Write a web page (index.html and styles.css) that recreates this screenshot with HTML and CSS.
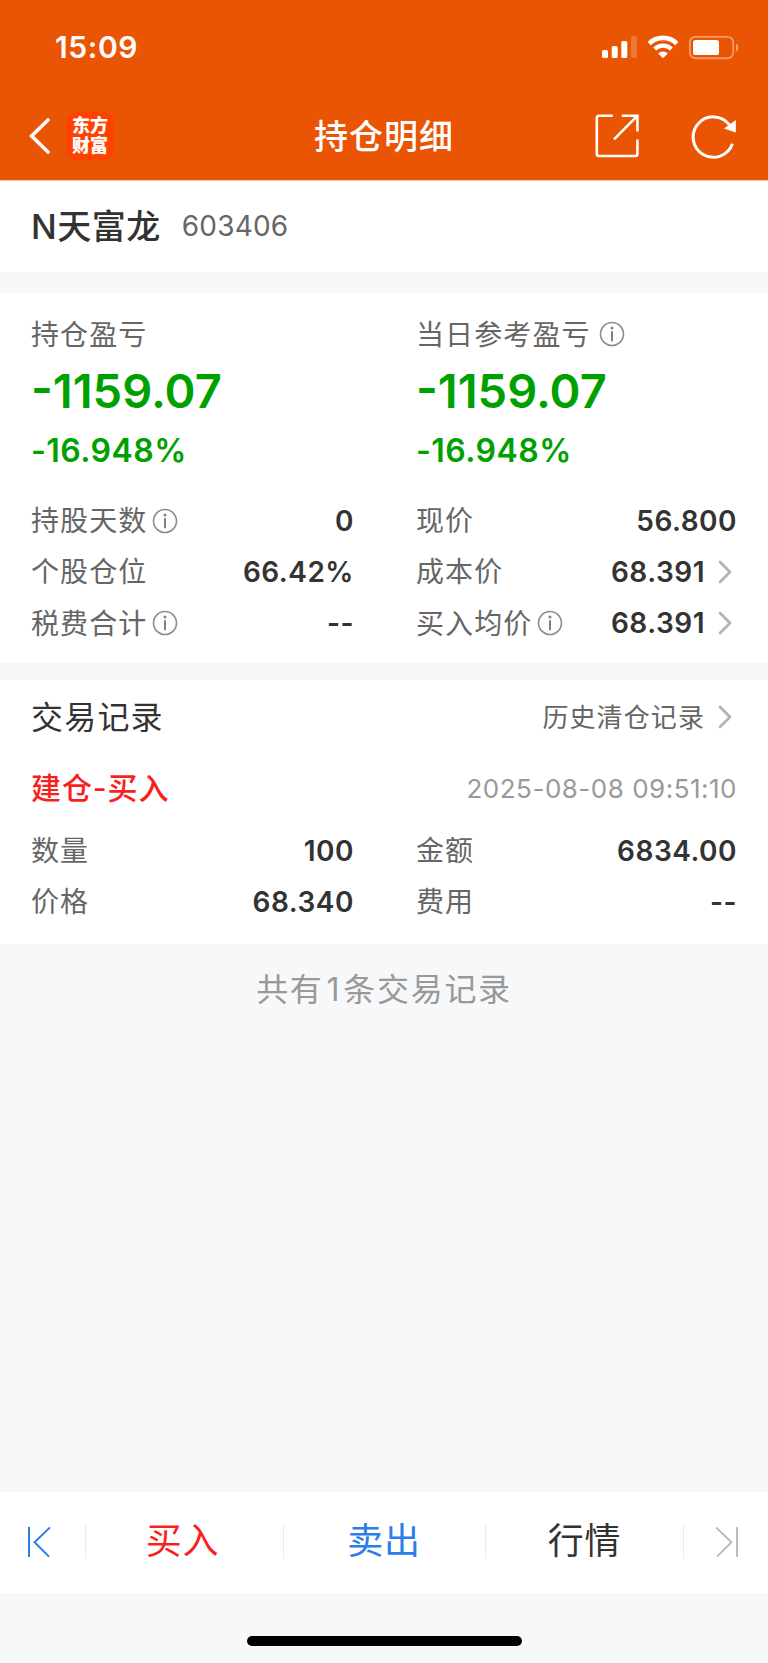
FILE: index.html
```
<!DOCTYPE html>
<html lang="zh-CN">
<head>
  <meta charset="UTF-8" />
  <meta name="viewport" content="width=device-width, initial-scale=1.0"/>
  <title>持仓明细</title>
  <link rel="stylesheet" href="styles.css">
</head>
<body>

  <!-- Shared icons -->
  <svg class="sprite" width="0" height="0">
    <symbol id="info" viewBox="0 0 26 26">
      <circle cx="13" cy="13" r="11.5" fill="none" stroke="#8c8c8c" stroke-width="1.6"/>
      <circle cx="13" cy="6.9" r="1.5" fill="#808080"/>
      <path d="M13 11v8.6" stroke="#808080" stroke-width="2" stroke-linecap="round"/>
    </symbol>
    <symbol id="chevron" viewBox="0 0 14 24">
      <path d="M2 2l10 10L2 22" fill="none" stroke="#b3b3b3" stroke-width="2.8" stroke-linecap="round" stroke-linejoin="round"/>
    </symbol>
  </svg>

  <!-- Header -->
  <header class="header">
    <div class="status-bar">
      <span class="time">15:09</span>
      <svg class="status-icons" width="138" height="26" viewBox="0 0 138 26">
        <g fill="#fff">
          <rect x="0" y="16" width="6" height="8" rx="1.6"/>
          <rect x="9.7" y="12" width="6" height="12" rx="1.6"/>
          <rect x="19.3" y="7" width="6" height="17" rx="1.6"/>
          <rect x="29" y="2" width="6" height="22" rx="1.6" opacity=".2"/>
        </g>
        <g fill="none" stroke="#fff">
          <path d="M47.2 9.6a19.5 19.5 0 0 1 27.6 0" stroke-width="4.6"/>
          <path d="M52.6 15.1a12 12 0 0 1 16.8 0" stroke-width="4.2"/>
        </g>
        <path d="M56.2 19.5a7 7 0 0 1 9.6 0L61 24.3z" fill="#fff"/>
        <rect x="87.9" y="2.9" width="43.3" height="21.4" rx="5.5" fill="none" stroke="#fff" stroke-opacity=".4" stroke-width="1.9"/>
        <rect x="91" y="6" width="26" height="15" rx="2.6" fill="#fff"/>
        <path d="M134 9.5c3 1.2 3 7 0 8.2z" fill="#fff" fill-opacity=".45"/>
      </svg>
    </div>
    <div class="nav-bar">
      <div class="nav-left">
        <svg width="22" height="36" viewBox="0 0 22 36">
          <path d="M19 2L2.6 18 19 34" fill="none" stroke="#fff" stroke-width="3.6" stroke-linecap="round"/>
        </svg>
        <div class="logo"><span>东方</span><span>财富</span></div>
      </div>
      <h1 class="title">持仓明细</h1>
      <div class="nav-right">
        <svg width="44" height="44" viewBox="0 0 44 44">
          <g fill="none" stroke="#fff" stroke-width="2.6">
            <path d="M17.8 1.8H3.8a2 2 0 0 0-2 2V40a2 2 0 0 0 2 2h36.6a2 2 0 0 0 2-2V25.5"/>
            <path d="M26.8 1.8h15.6v15.8"/>
            <path d="M42 2.2L19 25.4"/>
          </g>
        </svg>
        <svg width="46" height="46" viewBox="0 0 46 46">
          <path d="M38.4 11.8A20.2 20.2 0 1 0 41.4 30.8" fill="none" stroke="#fff" stroke-width="3"/>
          <path d="M44.8 7v12.6L33 15.6z" fill="#fff"/>
        </svg>
      </div>
    </div>
  </header>

  <!-- Stock name -->
  <section class="stock">
    <h2>N天富龙</h2>
    <span class="code">603406</span>
  </section>

  <!-- Position -->
  <section class="position">
    <div class="column">
      <p class="label profit-label">持仓盈亏</p>
      <p class="profit">-1159.07</p>
      <p class="percent">-16.948%</p>
      <div class="row"><span class="label">持股天数</span><svg class="info"><use href="#info"/></svg><b>0</b></div>
      <div class="row"><span class="label">个股仓位</span><b>66.42%</b></div>
      <div class="row"><span class="label">税费合计</span><svg class="info"><use href="#info"/></svg><b>--</b></div>
    </div>
    <div class="column">
      <div class="profit-label"><span class="label">当日参考盈亏</span><svg class="info wide"><use href="#info"/></svg></div>
      <p class="profit">-1159.07</p>
      <p class="percent">-16.948%</p>
      <div class="row"><span class="label">现价</span><b>56.800</b></div>
      <div class="row"><span class="label">成本价</span><b>68.391</b><svg class="chevron"><use href="#chevron"/></svg></div>
      <div class="row"><span class="label">买入均价</span><svg class="info"><use href="#info"/></svg><b>68.391</b><svg class="chevron"><use href="#chevron"/></svg></div>
    </div>
  </section>

  <!-- Trade records -->
  <section class="records">
    <div class="records-head">
      <h3>交易记录</h3>
      <a class="history"><span>历史清仓记录</span><svg class="chevron"><use href="#chevron"/></svg></a>
    </div>
    <div class="trade-head">
      <span class="trade-type">建仓-买入</span>
      <span class="date">2025-08-08 09:51:10</span>
    </div>
    <div class="trade-body">
      <div class="row"><span class="label">数量</span><b>100</b></div>
      <div class="row"><span class="label">金额</span><b>6834.00</b></div>
      <div class="row"><span class="label">价格</span><b>68.340</b></div>
      <div class="row"><span class="label">费用</span><b>--</b></div>
    </div>
  </section>
  <p class="total">共有<span>1</span>条交易记录</p>

  <!-- Bottom bar -->
  <footer class="bottom">
    <nav class="tabs">
      <a class="tab first">
        <svg width="24" height="34" viewBox="0 0 24 34">
          <path d="M2 2v30M23 2.4L7.6 17.2 22 31.6" fill="none" stroke="#2b7de9" stroke-width="2"/>
        </svg>
      </a>
      <a class="tab buy">买入</a>
      <a class="tab sell">卖出</a>
      <a class="tab">行情</a>
      <a class="tab last">
        <svg width="24" height="34" viewBox="0 0 24 34">
          <path d="M22 2v30M1 2.4L16.4 17.2 2 31.6" fill="none" stroke="#bbb" stroke-width="2"/>
        </svg>
      </a>
    </nav>
    <div class="home-indicator"></div>
  </footer>

</body>
</html>
```
FILE: styles.css
```
* {
  margin: 0;
  padding: 0;
  box-sizing: border-box;
}

body {
  display: flex;
  flex-direction: column;
  width: 768px;
  height: 1663px;
  font-family: Inter, 'Noto Sans CJK SC', sans-serif;
  background: #f6f8fa;
  color: #333;
  overflow: hidden;
}

svg {
  flex: none;
  display: block;
}

.sprite {
  position: absolute;
}

/* Header */
.header {
  height: 181px;
  background: #ea5504;
  border-bottom: 1px solid #fac4a8;
  color: #fff;
}

.status-bar {
  display: flex;
  justify-content: space-between;
  align-items: center;
  height: 94px;
  padding: 0 28px 0 55px;
}

.time {
  font-size: 30px;
  font-weight: 600;
  letter-spacing: 0.6px;
}

.nav-bar {
  display: grid;
  grid-template-columns: 1fr auto 1fr;
  align-items: center;
  height: 84px;
  padding: 0 29px;
}

.nav-left {
  display: flex;
  align-items: center;
  gap: 15px;
}

.logo {
  display: flex;
  flex-direction: column;
  align-items: center;
  justify-content: center;
  width: 48px;
  height: 48px;
  border-radius: 10px;
  background: #ff4200;
  font-size: 18px;
  font-weight: 900;
  line-height: 20px;
}

.title {
  padding-bottom: 4px;
  font-size: 34px;
  font-weight: 500;
  letter-spacing: 1px;
}

.nav-right {
  display: flex;
  align-items: center;
  justify-content: flex-end;
  gap: 52px;
  padding-right: 2px;
}

/* Stock name */
.stock {
  display: flex;
  align-items: center;
  height: 91px;
  padding: 0 31px 2px;
  background: #fff;
}

.stock h2 {
  padding-bottom: 3px;
  font-size: 34px;
  font-weight: 500;
  letter-spacing: 0.5px;
}

.code {
  margin-left: 21px;
  font-size: 28px;
  letter-spacing: 0.2px;
  color: #666;
}

/* Position */
.position {
  display: grid;
  grid-template-columns: 323px 1fr;
  column-gap: 62px;
  height: 370px;
  margin-top: 21px;
  padding: 20px 31px 0;
  background: #fff;
}

.label {
  padding-bottom: 3px;
  font-size: 28px;
  color: #666;
  letter-spacing: 1.1px;
}

.profit-label {
  display: flex;
  align-items: center;
  height: 42px;
}

.profit {
  font-size: 47px;
  font-weight: 600;
  line-height: 72px;
  color: #00a000;
}

.percent {
  height: 48px;
  margin-bottom: 20px;
  font-size: 32px;
  font-weight: 600;
  line-height: 48px;
  letter-spacing: 0.45px;
  color: #00a000;
}

.row {
  display: flex;
  align-items: center;
  height: 51.3px;
}

.row b {
  margin-left: auto;
  font-size: 28px;
  font-weight: 600;
  letter-spacing: 0.5px;
}

.info {
  width: 26px;
  height: 26px;
  margin-left: 5px;
}

.info.wide {
  margin-left: 8px;
}

.chevron {
  width: 14px;
  height: 24px;
  margin: 0 5px 0 13px;
}

/* Trade records */
.records {
  height: 264px;
  margin-top: 17px;
  padding: 0 31px;
  background: #fff;
}

.records-head,
.trade-head {
  display: flex;
  align-items: center;
  justify-content: space-between;
  height: 73px;
}

.trade-head {
  height: 71px;
}

.records h3 {
  padding-bottom: 4px;
  font-size: 32px;
  font-weight: 400;
  letter-spacing: 1.2px;
}

.history {
  display: flex;
  align-items: center;
  font-size: 26px;
  letter-spacing: 1.1px;
  color: #666;
}

.history span {
  padding-bottom: 2px;
}

.trade-type {
  padding-bottom: 5px;
  font-size: 30px;
  font-weight: 500;
  letter-spacing: 0.9px;
  color: #fa1e1e;
}

.date {
  font-size: 26px;
  letter-spacing: 0.5px;
  color: #999;
}

.trade-body {
  display: grid;
  grid-template-columns: 323px 1fr;
  column-gap: 62px;
  padding-top: 1px;
}

.total {
  margin-top: 22px;
  font-size: 32px;
  line-height: 48px;
  letter-spacing: 1.7px;
  text-align: center;
  color: #999;
}

.total span {
  margin: 0 2px 0 3px;
}

/* Bottom bar */
.bottom {
  margin-top: auto;
  height: 171px;
}

.tabs {
  display: grid;
  grid-template-columns: 86px 198px 202px 198px 84px;
  height: 101px;
  background: #fff;
}

.tab {
  display: flex;
  align-items: center;
  justify-content: center;
  height: 35px;
  margin-top: 32px;
  border-right: 1px solid #ebebeb;
  font-size: 36px;
  line-height: 35px;
  letter-spacing: 0.8px;
}

.first {
  padding-right: 7px;
}

.last {
  padding-left: 2px;
  border-right: none;
}

.buy {
  padding-right: 4px;
  color: #fa1e1e;
}

.sell {
  padding-right: 1px;
  color: #2b7de9;
}

.home-indicator {
  width: 275px;
  height: 10px;
  margin: 43px auto 0;
  border-radius: 5px;
  background: #000;
}
```
